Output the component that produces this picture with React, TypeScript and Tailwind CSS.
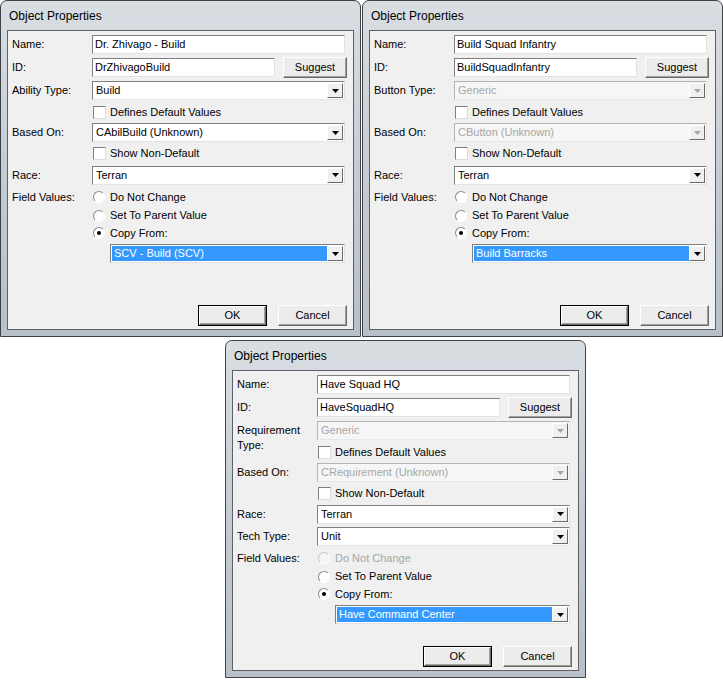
import React from "react";

function Arrow({ disabled }: { disabled?: boolean }) {
  return (
    <div className="flex h-full w-[16px] shrink-0 items-center justify-center border border-t-white border-l-white border-r-[#696969] border-b-[#696969] bg-[#f0f0f0]">
      <svg width="7" height="4" viewBox="0 0 7 4">
        <path d="M0 0h7L3.5 4z" fill={disabled ? "#a6a6a6" : "#000"} />
      </svg>
    </div>
  );
}

function Field({ value, className = "" }: { value: string; className?: string }) {
  return (
    <div
      className={`flex h-[19px] items-center border border-t-[#7f7f7f] border-l-[#7f7f7f] border-r-[#e3e3e3] border-b-[#e3e3e3] bg-white pl-[2px] text-black ${className}`}
    >
      {value}
    </div>
  );
}

function Combo({
  value,
  disabled,
  selected,
  className = "",
}: {
  value: string;
  disabled?: boolean;
  selected?: boolean;
  className?: string;
}) {
  const inner = selected ? "bg-[#3399ff] text-white" : disabled ? "text-[#a6a6a6]" : "text-black";
  return (
    <div
      className={`flex h-[19px] border ${
        disabled
          ? "border-t-[#b4b4b4] border-l-[#b4b4b4] border-r-[#e8e8e8] border-b-[#e8e8e8] bg-[#f6f6f6]"
          : "border-t-[#7f7f7f] border-l-[#7f7f7f] border-r-[#e3e3e3] border-b-[#e3e3e3] bg-white"
      } p-[1px] ${className}`}
    >
      <div className={`flex flex-1 items-center pl-[2px] ${inner}`}>{value}</div>
      <Arrow disabled={disabled} />
    </div>
  );
}

function Check({ label }: { label: string }) {
  return (
    <div className="flex items-center">
      <div className="ml-[1px] h-[13px] w-[13px] border border-t-[#808080] border-l-[#808080] border-r-[#dcdcdc] border-b-[#dcdcdc] bg-white" />
      <span className="ml-[4px]">{label}</span>
    </div>
  );
}

function Radio({ label, checked, disabled }: { label: string; checked?: boolean; disabled?: boolean }) {
  return (
    <div className={`flex items-center ${disabled ? "text-[#a6a6a6]" : "text-black"}`}>
      <div
        className={`ml-[1px] flex h-[12px] w-[12px] items-center justify-center rounded-full border ${
          disabled
            ? "border-t-[#c4c4c4] border-l-[#c4c4c4] border-r-white border-b-white bg-[#f4f4f4]"
            : "border-t-[#8a8a8a] border-l-[#8a8a8a] border-r-white border-b-white bg-white"
        }`}
      >
        {checked ? <div className="h-[4px] w-[4px] rounded-full bg-black" /> : null}
      </div>
      <span className="ml-[5px]">{label}</span>
    </div>
  );
}

function Btn({ label, def, className = "" }: { label: string; def?: boolean; className?: string }) {
  return (
    <div className={`h-[21px] ${def ? "border border-black" : ""} ${className}`}>
      <div className="flex h-full items-center justify-center border border-t-white border-l-white border-r-[#696969] border-b-[#696969] bg-[#ececec] text-black shadow-[inset_-1px_-1px_0_#a0a0a0]">
        {label}
      </div>
    </div>
  );
}

type DialogProps = {
  name: string;
  id: string;
  typeLabel: React.ReactNode;
  typeValue: string;
  typeDisabled?: boolean;
  basedOn: string;
  basedDisabled?: boolean;
  tech?: string;
  dncDisabled?: boolean;
  copyFrom: string;
  height: string;
};

function Dialog(p: DialogProps) {
  return (
    <div
      className={`flex w-[361px] shrink-0 flex-col rounded-t-[7px] border border-[#3e4247] bg-gradient-to-b from-[#d9dee3] via-[#c5ccd3] to-[#b7bfc8] ${p.height}`}
    >
      <div className="flex h-[29px] items-center pl-[8px] text-[12px] text-black">Object Properties</div>
      <div className="mx-[6px] mb-[6px] flex flex-1 flex-col border border-[#5d6166] bg-[#f0f0f0] pt-[1px] pr-[6px] pb-[3px] pl-[4px] text-[11px]">
        <div className="flex h-[24px] items-center">
          <div className="w-[80px] shrink-0">Name:</div>
          <Field value={p.name} className="mr-[2px] flex-1" />
        </div>
        <div className="flex h-[23px] items-center">
          <div className="w-[80px] shrink-0">ID:</div>
          <Field value={p.id} className="w-[183px]" />
          <Btn label="Suggest" className="ml-auto w-[64px]" />
        </div>
        <div className="flex h-[23px] items-start">
          <div className="w-[80px] shrink-0 pt-[4px] leading-[15px]">{p.typeLabel}</div>
          <Combo value={p.typeValue} disabled={p.typeDisabled} className="mr-[2px] flex-1 self-center" />
        </div>
        <div className="flex h-[20px] items-center pl-[80px]">
          <Check label="Defines Default Values" />
        </div>
        <div className="flex h-[21px] items-center">
          <div className="w-[80px] shrink-0">Based On:</div>
          <Combo value={p.basedOn} disabled={p.basedDisabled} className="mr-[2px] flex-1" />
        </div>
        <div className="flex h-[20px] items-center pl-[80px]">
          <Check label="Show Non-Default" />
        </div>
        <div className={`flex items-center ${p.tech ? "h-[22px]" : "h-[24px]"}`}>
          <div className="w-[80px] shrink-0">Race:</div>
          <Combo value="Terran" className="mr-[2px] flex-1" />
        </div>
        {p.tech ? (
          <div className="flex h-[23px] items-center">
            <div className="w-[80px] shrink-0">Tech Type:</div>
            <Combo value={p.tech} className="mr-[2px] flex-1" />
          </div>
        ) : null}
        <div className="flex h-[20px] items-center">
          <div className="w-[80px] shrink-0">Field Values:</div>
          <Radio label="Do Not Change" disabled={p.dncDisabled} />
        </div>
        <div className="flex h-[17px] items-center pl-[80px]">
          <Radio label="Set To Parent Value" />
        </div>
        <div className="flex h-[18px] items-center pl-[80px]">
          <Radio label="Copy From:" checked />
        </div>
        <div className="mt-[2px] flex pl-[98px] pr-[2px]">
          <Combo value={p.copyFrom} selected className="flex-1" />
        </div>
        <div className="mt-auto flex justify-end gap-[11px]">
          <Btn label="OK" def className="w-[69px]" />
          <Btn label="Cancel" className="w-[69px]" />
        </div>
      </div>
    </div>
  );
}

export default function App() {
  return (
    <div className="h-[681px] w-[723px] overflow-hidden bg-white font-['Liberation_Sans',Arial,sans-serif] text-black">
      <div className="flex gap-[1px]">
        <Dialog
          height="h-[337px]"
          name="Dr. Zhivago - Build"
          id="DrZhivagoBuild"
          typeLabel="Ability Type:"
          typeValue="Build"
          basedOn="CAbilBuild (Unknown)"
          copyFrom="SCV - Build (SCV)"
        />
        <Dialog
          height="h-[337px]"
          name="Build Squad Infantry"
          id="BuildSquadInfantry"
          typeLabel="Button Type:"
          typeValue="Generic"
          typeDisabled
          basedOn="CButton (Unknown)"
          basedDisabled
          copyFrom="Build Barracks"
        />
      </div>
      <div className="ml-[225px] mt-[3px]">
        <Dialog
          height="h-[338px]"
          name="Have Squad HQ"
          id="HaveSquadHQ"
          typeLabel={
            <>
              Requirement
              <br />
              Type:
            </>
          }
          typeValue="Generic"
          typeDisabled
          basedOn="CRequirement (Unknown)"
          basedDisabled
          tech="Unit"
          dncDisabled
          copyFrom="Have Command Center"
        />
      </div>
    </div>
  );
}
